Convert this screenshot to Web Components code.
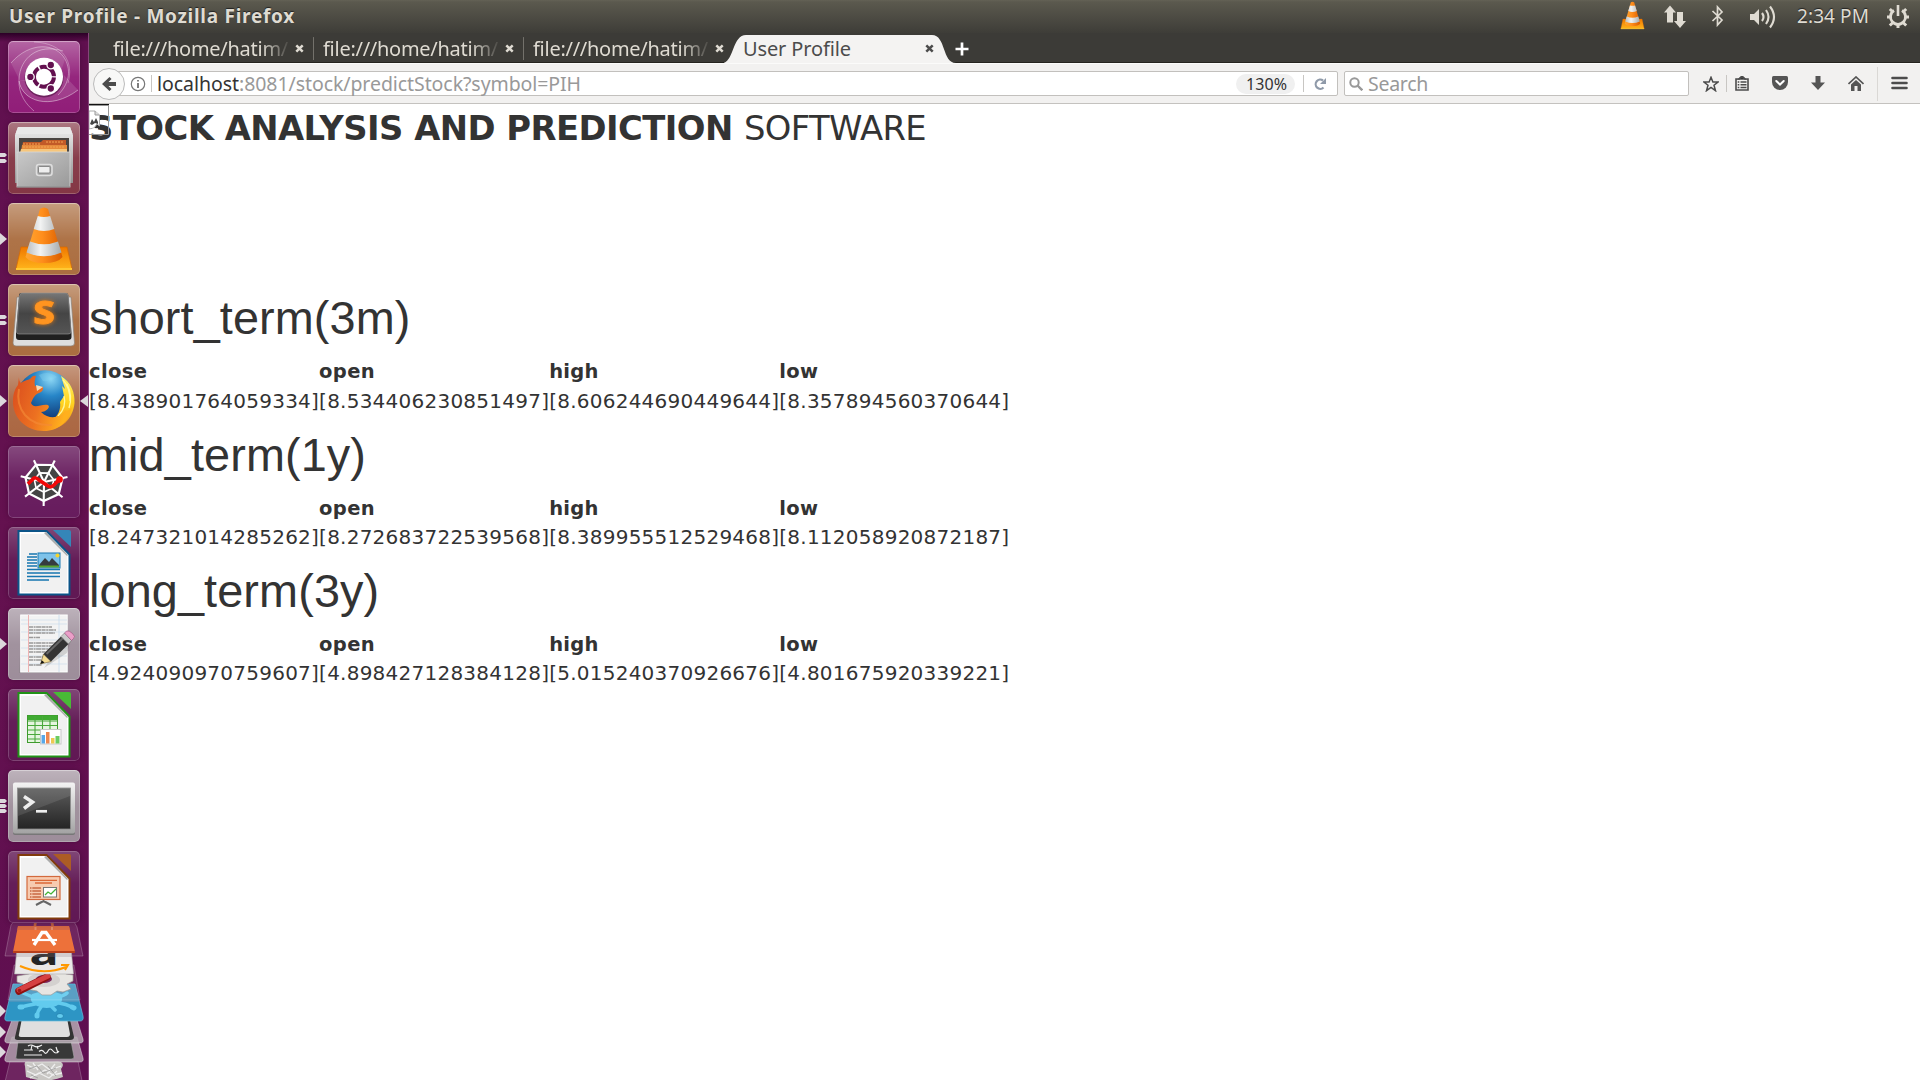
<!DOCTYPE html>
<html lang="en">
<head>
<meta charset="utf-8">
<title>User Profile</title>
<style>
html,body{margin:0;width:1920px;height:1080px;overflow:hidden;background:#fff}
</style>
</head>
<body>
<desktop-shell></desktop-shell>
<script>
const UI = '"Noto Sans","Open Sans",sans-serif';
function define(name, html, setup) {
  const t = document.createElement('template');
  t.innerHTML = html;
  customElements.define(name, class extends HTMLElement {
    connectedCallback() {
      if (this.shadowRoot) return;
      this.attachShadow({mode: 'open'}).append(t.content.cloneNode(true));
      if (setup) setup.call(this, this.shadowRoot);
    }
  });
}

/* One line of text, tracked so that its advance equals the w attribute */
define('fit-text', `<style>:host{display:block;white-space:pre;flex:none}span{display:inline-block}</style><span><slot></slot></span>`, function (r) {
  const w = +this.getAttribute('w'), s = r.querySelector('span');
  s.style.letterSpacing = '0';
  const now = s.getBoundingClientRect().width, n = this.textContent.length;
  s.style.letterSpacing = ((w - now) / n) + 'px';
  this.style.width = w + 'px';
});

const cone = `<defs><linearGradient id="o"><stop offset="0" stop-color="#ffa733"/><stop offset=".45" stop-color="#ff8e1c"/><stop offset="1" stop-color="#d95c00"/></linearGradient><linearGradient id="w"><stop offset="0" stop-color="#b9bdc0"/><stop offset=".4" stop-color="#f2f3f3"/><stop offset="1" stop-color="#a5aaad"/></linearGradient><linearGradient id="b" x2="0" y2="1"><stop offset="0" stop-color="#f07800"/><stop offset="1" stop-color="#ffb31a"/></linearGradient></defs>
<path d="M13 44H59L64 66H8Z" fill="url(#b)" stroke="#d86a00" stroke-width=".7"/><path d="M8 65H64V67H8Z" fill="#ffc933"/>
<path d="M32 6Q36 3 40 6L54.500 54Q50 60 36 60T17.500 54Z" fill="url(#o)"/>
<path d="M29.800 13Q36 15 42.200 13L46.300 26Q36 30 25.700 26ZM22 38.500Q36 44 50 38.500L53.500 49.500Q36 57 18.500 49.500Z" fill="url(#w)"/>`;
const doc = (c, d) => `<path d="M9.500 3H39L62.500 27V68.500H9.500Z" fill="${c}"/><path d="M11.500 5H38L60.500 28V66.500H11.500Z" fill="#fff"/><path d="M13 7H38L59 29V65H13Z" fill="#f1f1f1"/><path d="M38 5L60 28L59 29L36 6Z" fill="#aaa"/><path d="M45 3H61Q63 3 63 5V20Z" fill="${d}"/>`;
const icons = {
ubuntu: `<g fill="none" stroke="#fff"><path d="M3 22C22 0 48 2 57 18C64 31 60 44 50 54" stroke-opacity=".38"/><path d="M26 1C56 2 66 22 60 42" stroke-opacity=".3"/><path d="M55 10C30 2 12 17 11 38C10 54 19 64 26 70" stroke-opacity=".38"/><path d="M11 40C14 60 42 70 70 49" stroke-opacity=".42"/></g><path d="M3 22C22 0 48 2 57 18L50 40H12Z" fill="#fff" opacity=".11"/><path d="M11 40C14 60 42 70 70 49L54 32Z" fill="#fff" opacity=".13"/>
<circle cx="36" cy="37" r="19.500" fill="#340028" opacity=".45"/><circle cx="36" cy="35.700" r="19" fill="#fff"/><circle cx="36" cy="35.700" r="10" fill="none" stroke="#63104f" stroke-width="4" stroke-dasharray="19.300 1.640" stroke-dashoffset="-0.800"/><g fill="#63104f" stroke="#fff" stroke-width="1.300"><circle cx="42.800" cy="24" r="3.800"/><circle cx="22.400" cy="35.900" r="3.800"/><circle cx="42.800" cy="47.500" r="3.800"/></g>`,
files: `<defs><linearGradient id="g" x2="0" y2="1"><stop offset="0" stop-color="#eee"/><stop offset="1" stop-color="#929292"/></linearGradient><linearGradient id="h" x2="1" y2="1"><stop offset="0" stop-color="#c9c9c9"/><stop offset="1" stop-color="#999999"/></linearGradient></defs>
<path d="M10 5H62L65 13V61H7V13Z" fill="url(#g)"/><path d="M10 5H62L64.500 12H7.500Z" fill="#e9e9e9"/><path d="M11 16H61V31H11Z" fill="#4a4542"/><path d="M15 20H33L35 18H58V31H13Z" fill="#c25a28"/><path d="M14 23H59V31H13Z" fill="#e58a3c"/><path d="M13 27H59V31H12Z" fill="#f6c67c"/><path d="M15 22H32M38 20H56M15 25H57" stroke="#f5a552" stroke-dasharray="2 1"/>
<rect x="9" y="30" width="53" height="35" fill="url(#h)" stroke="#d8d8d8" stroke-width=".8"/><path d="M9 65H62" stroke="#777"/><rect x="28.500" y="42.500" width="15.500" height="11" rx="2.500" fill="#a5a5a5" stroke="#dedede" stroke-width="1.600"/><rect x="30.500" y="44.500" width="11.500" height="6.500" rx="1" fill="#eee" stroke="#777" stroke-width=".8"/>`,
vlc: cone,
sublime: `<defs><linearGradient id="k" x2="0" y2="1"><stop offset="0" stop-color="#777"/><stop offset=".5" stop-color="#454545"/><stop offset="1" stop-color="#555"/></linearGradient></defs>
<path d="M9 13H63L66.500 59Q66.500 62 63 62H8Q5 62 5 59Z" fill="#dedede" stroke="#8d8175" stroke-width=".7"/><path d="M13 9H58Q60 9 60.500 12L63.500 49V53Q63.500 56 60 56H11Q8 56 8 53V49L11 12Q11 9 13 9Z" fill="#202020"/><path d="M14 9H57Q60 9 60.500 12L63 48Q63 50 60 50H11Q8.500 50 8.500 48L11.500 12Q12 9 14 9Z" fill="url(#k)" stroke="#999" stroke-width=".6"/><text transform="translate(36 40) scale(1.2 1)" text-anchor="middle" font-family="Noto Sans,sans-serif" font-weight="800" font-size="32" fill="#ff9420" stroke="#ff9420" stroke-width=".8" style="filter:drop-shadow(0 0 2px #e67b10)">S</text>`,
firefox: `<defs><radialGradient id="f" cx=".6" cy=".15" r=".75"><stop offset="0" stop-color="#8ed8f5"/><stop offset=".4" stop-color="#2786c8"/><stop offset="1" stop-color="#0c2f6c"/></radialGradient><linearGradient id="x" x2="1" y2=".3"><stop offset="0" stop-color="#d84b1e"/><stop offset=".55" stop-color="#ed7121"/><stop offset="1" stop-color="#ffb01d"/></linearGradient><linearGradient id="y" x2="0" y2="1"><stop offset="0" stop-color="#fff26a"/><stop offset=".5" stop-color="#ffd320"/><stop offset="1" stop-color="#f18a1c"/></linearGradient></defs>
<circle cx="37" cy="34" r="28.800" fill="url(#f)"/><path d="M31 10Q40 5 49 12Q41 17 35 16Z" fill="#88d4f2" opacity=".35"/>
<path d="M53 11C63 17 67 27 66.500 38C65 55 52 66 36 65L42 56C51 52 53 43 52 37L56 31L54 21L57 24Z" fill="url(#y)"/><path d="M55 15Q62 22 62 36M59 19Q65 31 61 43M56 31Q59 42 50 51" stroke="#fff8a0" stroke-width="1.300" fill="none"/>
<path d="M11 12C11 16 12 17 13 18C17 15 20 15 22 14C24 12 25 10 28 11C27 14 26 17 27 21L35 22Q36 26 31 28C26 30 25 34 23 38C26 45 34 38 40 40C43 42 38 47 33 47C39 53 46 53 51 51C54 50 56 47 57 45C60 47 62 44 64 42C61 56 51 66 36 66C18 66 5 53 5 37C5 28 7 24 10 20Z" fill="url(#x)"/><path d="M28 20L35 22L29 26Z" fill="#f8dbb5"/><path d="M11 24Q8 39 17 50Q27 61 44 60" fill="none" stroke="#f58a35" stroke-width="2" opacity=".65"/>`,
spyder: (() => { let s = '', o = []; for (let i = 0; i < 7; i++) { const a = (i * 360 / 7 - 12) * Math.PI / 180; o.push([Math.cos(a), Math.sin(a)]); }
  const P = k => o.map(p => (36 + p[0] * k).toFixed(1) + ',' + (36 + p[1] * k).toFixed(1)).join(' ');
  s += `<polygon points="${P(19)}" fill="#444" stroke="#fff" stroke-width="2.200"/><polygon points="${P(10)}" fill="none" stroke="#fff" stroke-width="1.600"/>`;
  for (const p of o) s += `<path d="M36 36L${36 + p[0] * 24} ${36 + p[1] * 24}" stroke="#fff" stroke-width="2.100"/>`;
  return s + `<path d="M20 38L26 32Q28 31 31 34L40 40Q43 42 46 39L51 34" stroke="#f10808" stroke-width="3.600" fill="none"/><circle cx="51.500" cy="33.500" r="3.300" fill="#f10808"/>`; })(),
writer: doc('#0b5488', '#3586b8') + `<path d="M21 27H29M19 30H29M19 33H29M19 36H29M19 39H29" stroke="#1676b0" stroke-width="1.500"/><path d="M19 42.500H52M19 46H52M19 49.500H52M19 53H41" stroke="#1676b0" stroke-width="1.600"/><rect x="30" y="26" width="22" height="15" fill="#7ec3ea" stroke="#1978b2"/><path d="M31 38L37 31L41 35L44 31L51 38V40H31Z" fill="#353b40"/><path d="M31 38.500H51V40.500H31Z" fill="#59a52e"/><circle cx="49.500" cy="28.500" r="2" fill="#f5d42b"/>`,
gedit: `<path d="M13 8H59.500V65H11.500Z" fill="#777" opacity=".55"/><rect x="12.700" y="7" width="46.500" height="57" fill="#f3f3f3" stroke="#fff"/><path d="M13 12H59M13 16H59M13 24H59M13 32H59M13 40H59M13 48H59M13 56H59" stroke="#cdddeb" stroke-width=".7"/><path d="M20.500 7V64" stroke="#efb3b3"/><path d="M51 7V64" stroke="#c4d9ee" stroke-width=".8"/><g stroke="#999" stroke-width="1.300" stroke-dasharray="4 .6 2 .5 5 .5"><path d="M21 19H44M21 22H48M21 25H47M21 29.500H32M21 35H51M21 38H46M21 41H49M21 44H45M21 49H44M21 52H40M21 57H34"/></g>
<path d="M36 60L59 45L63 32L43 50Z" fill="#555" opacity=".22"/><path d="M32.500 56L35.500 46L43 53.500Z" fill="#f4dc93" stroke="#6b5a30" stroke-width=".6"/><path d="M32.500 56L33.700 52.200L36.500 54.500Z" fill="#111"/><path d="M35.500 46L53 28.500L60.500 36L43 53.500Z" fill="#333"/><path d="M38.500 46L55.500 29.500" stroke="#666" stroke-width="2"/><path d="M53 28.500L56.500 25L63.500 32.500L60.500 36Z" fill="#c9c9c9" stroke="#777" stroke-width=".6"/><path d="M56.500 25L58.500 23Q61 22 64.500 25.500T65.500 30.500L63.500 32.500Z" fill="#eb9fc8" stroke="#99547c" stroke-width=".6"/>`,
calc: doc('#219217', '#49b936') + `<rect x="19.500" y="26.500" width="30" height="27" fill="#e5f5df" stroke="#3e9b2d"/><path d="M20 28.800H49" stroke="#3fab31" stroke-width="4.500"/><path d="M20 32H49M20 36.500H49M20 41H49M20 45.500H49M20 50H49M27 27V53M34.500 27V53M42 27V53" stroke="#49a83b" stroke-width="1.100"/><rect x="32.500" y="40.500" width="20.500" height="14.500" fill="#fff" stroke="#c7c7c7"/><path d="M33.500 54.500V46H37V54.500Z" fill="#58a8e8"/><path d="M38 54.500V43H41.500V54.500Z" fill="#ed8750"/><path d="M43 54.500V49H46.500V54.500Z" fill="#edc953"/><path d="M47.500 54.500V47H51.500V54.500Z" fill="#6bcc62"/>`,
term: `<defs><linearGradient id="t" x2="0" y2="1"><stop offset="0" stop-color="#f4f4f4"/><stop offset="1" stop-color="#a3a3a3"/></linearGradient><linearGradient id="s" x2="0" y2="1"><stop offset="0" stop-color="#5c5c5c"/><stop offset="1" stop-color="#242424"/></linearGradient></defs><rect x="5" y="14" width="62" height="51" rx="2" fill="#777"/><rect x="5" y="12.500" width="62" height="51" rx="2" fill="url(#t)"/><rect x="9.500" y="18" width="53" height="41" fill="url(#s)" stroke="#8d8d8d" stroke-width=".8"/><path d="M10 18H62V26L10 46Z" fill="#fff" opacity=".1"/><path d="M16 26.500L24.500 32L16 38.500" fill="none" stroke="#eee" stroke-width="3.500"/><path d="M28 41.300H39" stroke="#eee" stroke-width="2.700"/>`,
impress: doc('#813b0c', '#ac5c25') + `<rect x="19" y="25.500" width="33" height="23" fill="#f7cbb0" stroke="#d3693d" stroke-width="1.200"/><path d="M22 29.300H49M27 32H44" stroke="#dc6837" stroke-width="1.300"/><path d="M22 37H33M22 40H33M22 43H33M22 46H33" stroke="#c96a43" stroke-width="1.300" stroke-dasharray="1.500 .8 10"/><rect x="35.500" y="36.500" width="13" height="9.500" fill="#fff" stroke="#777"/><path d="M37 44L40 41L43 43L48 38" stroke="#42b336" stroke-width="1.300" fill="none"/><path d="M35.500 49V51M35.500 50L28 54M35.500 50L43 54" stroke="#666" stroke-width="2"/>`
};

define('launcher-item', `<style>:host{display:block;position:relative;height:72px;padding-left:8px}
.tile{box-sizing:border-box;width:72px;height:72px;border-radius:5px;background:linear-gradient(#ffffff58,#ffffff12 50%,#ffffff08),var(--c);box-shadow:inset 0 0 0 1px #ffffff38,inset 0 1px 1px #ffffff40,0 0 5px #30002870}
:host([dark]) .tile{background:linear-gradient(#ffffff38,#ffffff0c 45%,#ffffff05),var(--c);box-shadow:inset 0 0 0 1px #ffffff30,0 0 5px #30002870}
svg{display:block;width:72px;height:72px}.mark{position:absolute;left:0;top:28px;width:8px;height:16px}.act{position:absolute;right:0;top:30px;width:8px;height:12px}</style><div class="tile"></div>`, function (r) {
  const t = r.querySelector('.tile');
  t.style.setProperty('--c', this.getAttribute('tint'));
  t.innerHTML = `<svg viewBox="0 0 72 72">${icons[this.getAttribute('icon')]}</svg>`;
  const n = this.getAttribute('windows');
  const m = {1: 'M0 2L7 8L0 14Z', 2: 'M0 3H5L7 5L5 7H0ZM0 9H5L7 11L5 13H0Z', 3: 'M0 1H5L7 3L5 5H0ZM0 6H5L7 8L5 10H0ZM0 11H5L7 13L5 15H0Z'}[n];
  if (m) t.insertAdjacentHTML('afterend', `<svg class="mark" viewBox="0 0 8 16"><path d="${m}" fill="#dcd8dc"/></svg>`);
  if (this.hasAttribute('active')) t.insertAdjacentHTML('afterend', `<svg class="act" viewBox="0 0 8 12"><path d="M8 0V12L0 6Z" fill="#dcd8dc"/></svg>`);
});

/* Folded launcher entries */
define('launcher-stack', `<style>:host{display:block;margin-top:-3px}svg{display:block;overflow:visible}</style>
<svg width="88" height="170" viewBox="0 0 88 170">
<path d="M15 0H73L77 7L83 36H5L11 5Z" fill="#ffffff18" stroke="#ffffff38"/>
<path d="M10 141H78L84 170H3Z" fill="#ffffff18" stroke="#ffffff38"/><path d="M25 146Q23 140 31 142L58 141Q66 143 61 149L63 157Q45 164 26 157Z" fill="#c9c7c4"/><path d="M27 145L34 148L42 144L50 150L61 146M27 151L36 155L45 150L53 155L62 153M30 158L39 153L49 158L57 151M33 143L38 150M55 144L47 154" stroke="#eee" stroke-width="1.300" fill="none"/><path d="M29 149L37 146L43 153L56 148M31 155L38 158M48 146L56 156" stroke="#999" stroke-width=".8" fill="none"/>
<path d="M12 117H77L83 138Q84 142 80 142H8Q4 142 5 138Z" fill="#b5a9b3" fill-opacity=".8" stroke="#ffffff65"/><path d="M18 121H71L74 137Q74 139 71 139H18Q15 139 16 137Z" fill="#383838" stroke="#aaa" stroke-width=".6"/><path d="M28 126Q31 124 34 126T42 125M32 125L31 130M37 126L38 129M39 131.500Q42 129 44 132T48 131T53 131T59 131M56 127L58 133M24 130H33M24 135H42" stroke="#eee" stroke-width="1.200" fill="none"/>
<path d="M12 100H77L83 119Q84 123 80 123H8Q4 123 5 119Z" fill="#b5a9b3" fill-opacity=".85" stroke="#ffffff65"/><path d="M19 100H70L74 117Q74 120 70 120H18Q14 120 15 117Z" fill="#333"/><path d="M22 98H67L70 114Q70 117 67 117H21Q18 117 19 114Z" fill="#dfdfdf"/>
<path d="M13 64H75L83 96Q84 101 80 101H8Q4 101 5 97Z" fill="#2d95c4" stroke="#69bddd" stroke-width=".7"/><path d="M13 65H75L79 82H9Z" fill="#7296b7" opacity=".4"/><path d="M32 74Q48 68 61 74Q65 82 56 86Q47 90 37 86Q28 82 32 74Z" fill="#62cbee"/><g stroke="#62cbee" fill="none" stroke-linecap="round"><path d="M35 84Q29 85 21 87M41 87Q38 90 37 96M52 87L55 90M59 83Q66 84 72 87M59 77Q65 75 67 73M33 77L23 73" stroke-width="3.500"/><path d="M20 87H22M37 95V96M72 87L74 88" stroke-width="5"/></g><ellipse cx="60" cy="96" rx="3.500" ry="2.500" fill="#62cbee" stroke="#1d78a6" stroke-width=".7"/>
<path d="M14 45H74L80 80H8Z" fill="#ffffff18" stroke="#ffffff30"/><path d="M17 56L29 54L35 50H61L66 54L73 55V61L67 64L71 69L63 72L57 71L51 75H42L37 71L26 69L23 64L17 62Z" fill="#e7e5e2" stroke="#9d9996" stroke-width=".7"/><ellipse cx="44" cy="60" rx="16" ry="7" fill="#d4d1cf"/><ellipse cx="44" cy="59" rx="8" ry="4" fill="#7b285f"/><path d="M19 71L47 57" stroke="#8f1010" stroke-width="7.500" stroke-linecap="round"/><path d="M19 70L48 56" stroke="#d64041" stroke-width="5" stroke-linecap="round"/><circle cx="19.500" cy="70.500" r="1.800" fill="#9a1a1a"/>
<path d="M17 28H71L73.500 54H14.500Z" fill="#eae8e8" stroke="#aaa" stroke-width=".6"/><text text-anchor="middle" font-family="Noto Sans,sans-serif" font-weight="700" font-size="44" fill="#242424" transform="translate(44 45) scale(1.1 .75)">a</text><path d="M17 28H71L72 37H16Z" fill="#8c7c88" opacity=".25"/><path d="M20 46Q43 56 66 47M61 45L68 45L65 50" fill="none" stroke="#ff9800" stroke-width="2"/>
<path d="M35 10V5Q35 1 39 1H49Q52.500 1 52.500 5V10" fill="none" stroke="#bd6043" stroke-width="2.700"/><path d="M18 6H69L75 32H13Z" fill="#ed713a"/><path d="M18 6H69L70 10H17Z" fill="#c96549" opacity=".7"/><path d="M35.500 10V7M52 10V7" stroke="#e08a68" stroke-width="2"/><path d="M13 31H75V33H13Z" fill="#b73f1b"/><path d="M34 25L42 12.500H46L55 25" fill="none" stroke="#fff" stroke-width="3.300"/><path d="M32 20H57" stroke="#fff" stroke-width="2.200"/>
<g fill="#dcd8dc"><path d="M0 85L6 91L0 97ZM0 106L6 112L0 118ZM0 126L6 132L0 138Z"/></g>
</svg>`);

define('side-launcher', `<style>:host{display:flex;flex-direction:column;box-sizing:border-box;width:89px;height:1047px;flex:none;overflow:hidden;border-right:1px solid #85467a;background:linear-gradient(#2b0026,#60104f 9px,#64114f 50%,#5f0f50);padding-top:8px}
.list{display:flex;flex-direction:column;gap:9px}</style>
<div class="list">
<launcher-item icon="ubuntu" tint="#8d1674"></launcher-item>
<launcher-item icon="files" tint="#80303f" windows="2"></launcher-item>
<launcher-item icon="vlc" tint="#a8693a" windows="1"></launcher-item>
<launcher-item icon="sublime" tint="#a8693a" windows="2"></launcher-item>
<launcher-item icon="firefox" tint="#a8623c" windows="1" active></launcher-item>
<launcher-item icon="spyder" tint="#64175a" dark></launcher-item>
<launcher-item icon="writer" tint="#5d1350" dark></launcher-item>
<launcher-item icon="gedit" tint="#9a8a97" windows="1"></launcher-item>
<launcher-item icon="calc" tint="#5d1350" dark></launcher-item>
<launcher-item icon="term" tint="#9a8a97" windows="3"></launcher-item>
<launcher-item icon="impress" tint="#5d1350" dark></launcher-item>
</div><launcher-stack></launcher-stack>`);

define('system-panel', `<style>:host{display:flex;align-items:center;box-sizing:border-box;height:33px;padding:0 10px 0 9px;background:linear-gradient(#646255,#5b594e 2px,#3e3d38);color:#dfdbd2;font:19px/33px ${UI};text-shadow:0 -1px 1px #222}
.t{font-weight:700;font-size:19px;line-height:32px;height:33px;flex:1}svg{display:block;flex:none}</style>
<div class="t"><fit-text w="286">User Profile - Mozilla Firefox</fit-text></div>
<svg width="25" height="29" viewBox="6 3 60 66" preserveAspectRatio="none" style="margin:-2px 18px 0 0">${cone}</svg>
<svg width="24" height="24" viewBox="0 0 24 24" style="margin-right:24px" fill="#dfdbd2"><path d="M7 .5L13 7.500H10V17.500H4V7.500H1ZM14 7H20V16H23L17 23L11 16H14Z"/></svg>
<svg width="13" height="22" viewBox="0 0 13 22" style="margin:-2px 25px 0 0"><path d="M1.500 6L11 15L6.500 20V2L11 7L1.500 16" fill="none" stroke="#dfdbd2" stroke-width="1.700"/></svg>
<svg width="28" height="24" viewBox="0 0 28 24" style="margin-right:20px"><path d="M1 9H5L10 4V20L5 15H1Z" fill="#dfdbd2"/><g fill="none" stroke="#dfdbd2" stroke-width="2.100"><path d="M13 8Q16 12 13 16M17 5Q22 12 17 19M21 1.500Q29 12 21 22.500"/></g></svg>
<fit-text w="72" style="margin-right:17px">2:34 PM</fit-text>
<svg width="24" height="24" viewBox="0 0 24 24" style="margin-top:-2px"><g stroke="#dfdbd2" fill="none"><path d="M8 6.500A7.500 7.500 0 1 0 16 6.500" stroke-width="2.800"/><path d="M12 1V12" stroke-width="2.600"/><path d="M1 13H5M19 13H23M3.800 5L7 8M20.200 5L17 8M3.800 21.500L7 18.500M20.200 21.500L17 18.500M12 20V24" stroke-width="3"/></g></svg>`);

define('browser-tab', `<style>:host{display:flex;align-items:center;box-sizing:border-box;flex:none;width:210px;height:29px;padding:0 9px;border-right:1px solid #73716b;color:#dfdbd2;border-image:linear-gradient(#3c3b37 17%,#73716b 18% 90%,#3c3b37 91%) 1}
:host([last]){border-color:transparent;border-image:none}
.l{flex:1;overflow:hidden;padding-top:1px;-webkit-mask:linear-gradient(90deg,#000 148px,transparent 178px)}
svg{flex:none;margin-top:2px}
:host([active]){position:relative;width:230px;padding:0 20px 0 19px;border:0;color:#4c4c4c}
:host([active]) .l{-webkit-mask:none}
.bg{display:none}:host([active]) .bg{display:block;position:absolute;left:0;top:2px;margin:0;z-index:-1}</style>
<svg class="bg" width="232" height="28" viewBox="0 0 232 28"><path d="M-2 28C10 28 8 0 22 0H208C222 0 218 28 232 28Z" fill="#f4f3f2"/></svg>
<div class="l"><slot></slot></div><svg width="9" height="9" viewBox="0 0 9 9"><path d="M1.300 1.300L7.700 7.700M7.700 1.300L1.300 7.700" stroke="currentColor" stroke-width="2.500"/></svg>`);

define('tab-strip', `<style>:host{display:flex;position:relative;z-index:0;box-sizing:border-box;height:30px;background:#3c3b37;border-bottom:1px solid #25241f;padding-left:15px;font:20px/29px ${UI}}
.plus{display:block;margin:9px 0 0 1px}browser-tab[active]{margin-left:-10px}</style>
<browser-tab><fit-text w="175">file:///home/hatim/</fit-text></browser-tab><browser-tab><fit-text w="175">file:///home/hatim/</fit-text></browser-tab><browser-tab last><fit-text w="175">file:///home/hatim/</fit-text></browser-tab>
<browser-tab active><fit-text w="108">User Profile</fit-text></browser-tab>
<svg class="plus" width="14" height="14" viewBox="0 0 14 14"><path d="M7 .5V13.500M.5 7H13.500" stroke="#fff" stroke-width="2.700"/></svg>`);

define('nav-bar', `<style>:host{display:flex;align-items:center;box-sizing:border-box;height:41px;background:#f2f1f0;border-bottom:1px solid #c4c2bf;border-top:1px solid #fbfbfa;font:19.500px/23px ${UI};padding-left:4px;color:#999}
svg{display:block;flex:none}
.back{box-sizing:border-box;width:32px;height:32px;border:1px solid #bbb;border-radius:50%;background:#f8f8f7;display:flex;align-items:center;justify-content:center;z-index:1;flex:none}
.url,.search{box-sizing:border-box;height:25px;border:1px solid #c2c0bd;background:#fff;display:flex;align-items:center;border-radius:2px}
.url{width:1229px;margin-left:-16px;padding-left:20px;border-radius:0 2px 2px 0}
.sep{width:1px;height:17px;background:#c8c6c3;flex:none}
.host{color:#333}.zoom{box-sizing:border-box;width:59px;height:20px;border-radius:10px;background:#f0f0f0;color:#333;font-size:16px;line-height:20px;padding-left:10px;margin-left:auto}
.search{width:345px;margin-left:6px;padding-left:4px}.search fit-text{margin-left:5px}</style>
<div class="back"><svg width="14" height="16" viewBox="0 0 14 16"><path d="M0 8L7.500 1L9.500 3L6.500 6H14V10H6.500L9.500 13L7.500 15Z" fill="#4c4c4c"/></svg></div>
<div class="url"><svg width="16" height="16" viewBox="0 0 16 16"><circle cx="8" cy="8" r="6.700" fill="none" stroke="#777" stroke-width="1.200"/><path d="M8 7V12M8 4V5.600" stroke="#666" stroke-width="1.700"/></svg><i class="sep" style="margin:0 5px"></i><fit-text class="host" w="82">localhost</fit-text><fit-text w="342">:8081/stock/predictStock?symbol=PIH</fit-text>
<div class="zoom"><fit-text w="41">130%</fit-text></div><i class="sep" style="margin:0 10px 0 8px"></i><svg width="12" height="12" viewBox="0 0 12 12" style="margin-right:11px"><path d="M9.500 9.500A4.600 4.600 0 1 1 9 2.500" fill="none" stroke="#8f9aa9" stroke-width="2.200"/><path d="M12 0V6H6Z" fill="#8f9aa9"/></svg></div>
<div class="search"><svg width="14" height="14" viewBox="0 0 14 14"><circle cx="5.500" cy="5.500" r="4.200" fill="none" stroke="#999" stroke-width="2"/><path d="M8.500 8.500L13.300 13.300" stroke="#999" stroke-width="2.400"/></svg><fit-text w="60">Search</fit-text></div>
<svg width="16" height="16" viewBox="0 0 16 16" style="margin-left:14px"><path d="M8 1.300L9.900 6H15L11 9.200L12.500 14.700L8 11.500L3.500 14.700L5 9.200L1 6H6.100Z" fill="none" stroke="#4c4c4c" stroke-width="1.500"/></svg><i class="sep" style="margin-left:7px"></i>
<svg width="14" height="15" viewBox="0 0 14 15" style="margin:-1px 0 0 8px"><path d="M1 3H4L7 .3L10 3H13V14H1Z" fill="#f2f1f0" stroke="#4c4c4c" stroke-width="1.600"/><path d="M4 3H10L7 .3ZM2.700 6H4.300M5.500 6H11.500M2.700 8.700H4.300M5.500 8.700H11.500M2.700 11.400H4.300M5.500 11.400H11.500" stroke="#4c4c4c" stroke-width="1.500"/></svg>
<svg width="16" height="14" viewBox="0 0 16 14" style="margin:-1px 0 0 23px"><path d="M1.500 0H14.500Q16 0 16 1.500V6A8 8 0 0 1 0 6V1.500Q0 0 1.500 0Z" fill="#555"/><path d="M4.300 5L8 8.500L11.700 5" fill="none" stroke="#fff" stroke-width="2" stroke-linecap="round"/></svg>
<svg width="14" height="14" viewBox="0 0 14 14" style="margin:-1px 0 0 23px"><path d="M4.500 0H9.500V6.500H14L7 14L0 6.500H4.500Z" fill="#555"/></svg>
<svg width="16" height="15" viewBox="0 0 16 15" style="margin:-1px 0 0 23px"><path d="M.5 8L8 1L15.500 8" fill="none" stroke="#555" stroke-width="1.700"/><path d="M3 8.500L8 4L13 8.500V15H9.500V10H6.500V15H3Z" fill="#555"/></svg>
<i class="sep" style="height:34px;margin-left:13px;background:#dad8d5"></i>
<svg width="17" height="14" viewBox="0 0 17 14" style="margin:-2px 0 0 13px"><path d="M1.500 2H15.500M1.500 7H15.500M1.500 12H15.500" stroke="#4c4c4c" stroke-width="2.600" stroke-linecap="round"/></svg>`);

define('term-forecast', `<style>:host{display:block;height:136.400px;color:#333;font:20px/30px "DejaVu Sans",sans-serif}
h1{margin:0 0 .35px;padding-top:1px;font:400 46.800px/75.400px "Liberation Sans",sans-serif;letter-spacing:.12px}
.row{display:grid;grid-template-columns:repeat(4,230.100px)}.h{font-weight:700;font-size:19.500px}.v{margin-top:-1.500px}</style>
<h1><slot></slot></h1><div class="row h"><fit-text w="58.5">close</fit-text><fit-text w="56">open</fit-text><fit-text w="49.5">high</fit-text><fit-text w="39">low</fit-text></div><div class="row v"></div>`, function (r) {
  r.querySelector('.v').innerHTML = this.getAttribute('values').split(' ').map(v => `<fit-text w="230.1">[${v}]</fit-text>`).join('');
});

define('profile-page', `<style>:host{display:block;position:relative;flex:1;background:#fff;color:#333}
.title{display:flex;box-sizing:border-box;height:176.400px;padding-top:5px;font:33.800px/40px "DejaVu Sans",sans-serif}
.img{position:absolute;left:0;top:0}</style>
<div class="title"><fit-text w="655" style="font-weight:700">STOCK ANALYSIS AND PREDICTION </fit-text><fit-text w="182">SOFTWARE</fit-text></div>
<svg class="img" width="20" height="31" viewBox="0 0 20 31"><path d="M0 .7H20" stroke="#111" stroke-width="1.500"/><path d="M19.500 1V30.500H0" fill="none" stroke="#999"/><path d="M0 7H6L10.500 11V22L8 20L5 24L0 25Z" fill="#fff" stroke="#aaa"/><path d="M6 7V11H10.500" fill="#ddd" stroke="#999"/><path d="M1 20L3 15L5 18L7 14L9 18V20L6 19L3 21Z" fill="#444"/><path d="M0 26L5 24L9 24V29.500H0Z" fill="#fff" opacity=".8"/></svg>
<term-forecast values="8.438901764059334 8.534406230851497 8.606244690449644 8.357894560370644">short_term(3m)</term-forecast>
<term-forecast values="8.247321014285262 8.272683722539568 8.389955512529468 8.112058920872187">mid_term(1y)</term-forecast>
<term-forecast values="4.924090970759607 4.898427128384128 5.015240370926676 4.801675920339221">long_term(3y)</term-forecast>`);

define('desktop-shell', `<style>:host{display:flex;flex-direction:column;width:1920px;height:1080px;overflow:hidden}
.body{display:flex;flex:1;min-height:0}.win{display:flex;flex-direction:column;flex:1;min-width:0}</style>
<system-panel></system-panel><div class="body"><side-launcher></side-launcher><div class="win"><tab-strip></tab-strip><nav-bar></nav-bar><profile-page></profile-page></div></div>`);
</script>
</body>
</html>
